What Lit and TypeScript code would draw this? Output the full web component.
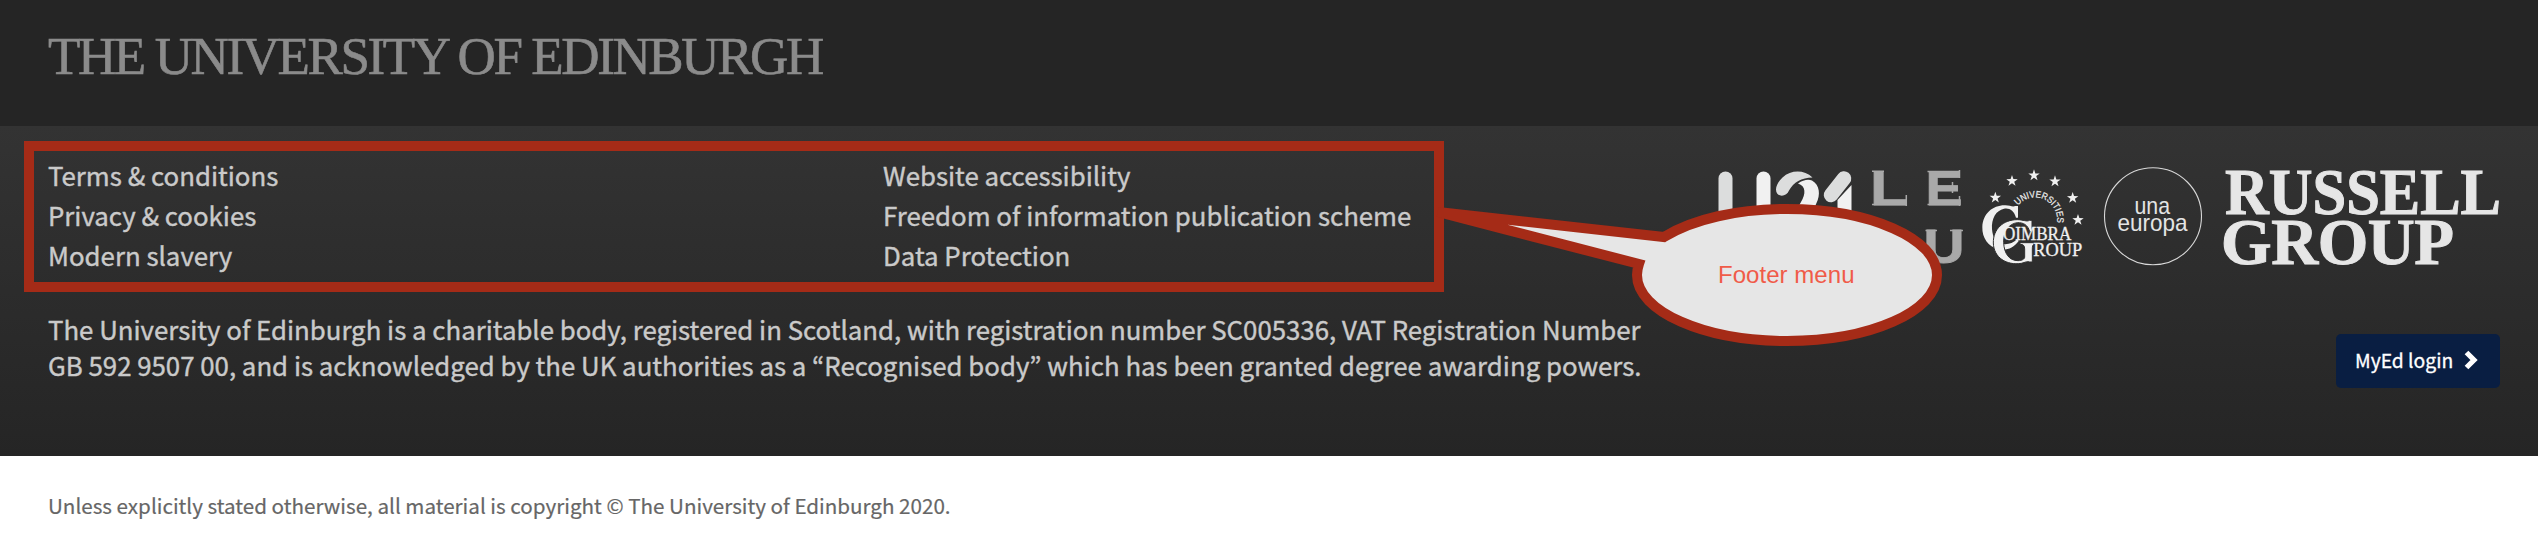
import { LitElement, html, css, svg } from "lit";

const MENU = [
  ["Terms & conditions", "Privacy & cookies", "Modern slavery"],
  ["Website accessibility", "Freedom of information publication scheme", "Data Protection"],
];

const STARS = [[106, 127], [156, 77], [222, 60], [285, 78], [338, 128], [354, 194]];

const star = ([x, y]: number[]) => {
  const pts = Array.from({ length: 10 }, (_, i) => {
    const r = i % 2 ? 7 : 18;
    const a = (Math.PI / 5) * i - Math.PI / 2;
    return `${(x + r * Math.cos(a)).toFixed(1)},${(y + 1 + r * Math.sin(a)).toFixed(1)}`;
  });
  return svg`<polygon points=${pts.join(" ")} />`;
};

class PartnerLogos extends LitElement {
  static styles = css`
    :host { display: flex; align-items: flex-start; }
    svg { display: block; flex: none; overflow: visible; }
    .u21 { width: 142px; height: 106px; }
    .leru { width: 104px; height: 106px; }
    .coimbra { width: 132px; height: 106px; }
    .una { width: 116px; height: 106px; }
    .russell { width: 286px; height: 106px; }
    .serif { font-family: "Liberation Serif", serif; }
    .sans { font-family: "Liberation Sans", sans-serif; }
    .bold { font-weight: 700; }
  `;

  render() {
    return html`
      <svg class="u21" viewBox="1718 165 142 106" role="img" aria-label="U21">
        <path d="M1725.5 178.5V240" stroke="#dcdddd" stroke-width="14" stroke-linecap="round" />
        <path d="M1763.5 178.5V240" stroke="#f1f1f1" stroke-width="14" stroke-linecap="round" />
        <path d="M1812.5 177.5C1804 169.5 1791 169.8 1782.5 177.5C1778.5 181.3 1776 185.5 1776 189.5C1776 197.5 1786.5 197.5 1789 190.5C1793.5 182.5 1801.5 177.5 1812.5 177.5Z" fill="#dcdddd" />
        <path d="M1798 183.5C1803 180 1808 179 1812 180.5C1820 185 1820.5 195 1816.5 203L1812 213H1795L1801 202C1806 194 1806 186 1798 183.5Z" fill="#f1f1f1" />
        <path d="M1831 195L1844 178.5" stroke="#dcdddd" stroke-width="14.5" stroke-linecap="round" />
        <path d="M1851.5 185V215H1837.5V200Z" fill="#f1f1f1" />
      </svg>
      <svg class="leru" viewBox="1860 165 104 106" role="img" aria-label="LERU">
        <g class="sans bold" fill="#a9a9a9" stroke="#a9a9a9" stroke-width="0.8" font-size="48">
          <text x="1870" y="204.5" textLength="38" lengthAdjust="spacingAndGlyphs">L</text>
          <text x="1925.5" y="204.5" textLength="37" lengthAdjust="spacingAndGlyphs">E</text>
          <text x="1923.5" y="262.5" textLength="41" lengthAdjust="spacingAndGlyphs">U</text>
        </g>
        <path d="M1872 171.3H1884M1872 204.5H1907M1906.3 195V206M1927.5 171.5H1960M1927.5 204.5H1960M1959.5 170V178M1959.5 196V206M1952.5 182V193M1925.5 230.5H1937M1950 230.5H1963" stroke="#a9a9a9" stroke-width="1.5" />
      </svg>
      <svg class="coimbra" viewBox="1964 165 132 106" role="img" aria-label="Coimbra Group Universities">
        <g transform="translate(1960 155) scale(0.333333)" fill="#f0f0f0">
          ${STARS.map(star)}
          <path id="arc" d="M174 152A66 66 0 0 1 288 214" fill="none" />
          <text class="sans" font-size="28" stroke="#f0f0f0" stroke-width="0.6">
            <textPath href="#arc" textLength="172" lengthAdjust="spacingAndGlyphs">UNIVERSITIES</textPath>
          </text>
          <path d="M174 153V188H168C162 166 148 158 132 161C108 166 94 190 96 222C98 248 108 264 124 266C140 270 158 266 172 252L176 258C160 280 138 288 116 282C84 276 66 248 67 216C69 176 98 150 136 151C150 151 158 157 166 153Z" />
          <path d="M216 196V230H209C204 210 190 202 172 203C146 206 130 230 131 262C132 296 148 317 174 317C186 317 194 312 194 306V282C194 272 190 268 180 268V263H222V268C218 270 217 274 217 282V321H209C202 318 196 322 184 325C140 332 101 308 100 264C99 222 130 194 172 194C190 194 200 201 208 196Z" stroke="#2f2f2f" stroke-width="3" />
          <g class="serif" stroke="#f0f0f0" stroke-width="1">
            <text x="129" y="256" font-size="58" textLength="205" lengthAdjust="spacingAndGlyphs">OIMBRA</text>
            <text x="220" y="302" font-size="58" textLength="147" lengthAdjust="spacingAndGlyphs">ROUP</text>
          </g>
        </g>
      </svg>
      <svg class="una" viewBox="2096 165 116 106" role="img" aria-label="una europa">
        <circle cx="2153" cy="216.3" r="48.5" fill="none" stroke="#d8d8d8" stroke-width="1.1" />
        <g class="sans" fill="#e4e4e4" font-size="24">
          <text x="2134.5" y="214" textLength="35.5" lengthAdjust="spacingAndGlyphs">una</text>
          <text x="2117.5" y="231" textLength="70" lengthAdjust="spacingAndGlyphs">europa</text>
        </g>
      </svg>
      <svg class="russell" viewBox="2212 165 286 106" role="img" aria-label="Russell Group">
        <g class="serif bold" fill="#e6e6e6" stroke="#e6e6e6" stroke-width="1" font-size="65">
          <text x="2225" y="214" textLength="276" lengthAdjust="spacingAndGlyphs">RUSSELL</text>
          <text x="2221" y="264" textLength="233">GROUP</text>
        </g>
      </svg>
    `;
  }
}
customElements.define("partner-logos", PartnerLogos);

class AppRoot extends LitElement {
  static styles = css`
    :host {
      display: block;
      position: relative;
      height: 550px;
      overflow: hidden;
      background: #fff;
      font-family: "Noto Sans CJK KR", "Noto Sans", sans-serif;
    }
    header { height: 126px; box-sizing: border-box; padding: 26px 48px 0; background: #252525; }
    h1 {
      margin: 0;
      font: 400 53px/60px "Liberation Serif", serif;
      letter-spacing: -2.4px;
      color: #8b8b8b;
      -webkit-text-stroke: 0.6px currentColor;
      white-space: nowrap;
    }
    footer {
      height: 330px;
      box-sizing: border-box;
      padding: 15px 40px 0 24px;
      display: flex;
      justify-content: space-between;
      background: linear-gradient(#333, #252525);
      color: #cacaca;
      -webkit-text-stroke: 0.4px currentColor;
    }
    nav {
      width: 1420px;
      height: 151px;
      box-sizing: border-box;
      border: 10px solid #a52b17;
      padding: 4px 14px;
      display: grid;
      grid-template-columns: 835px auto;
    }
    ul { margin: 0; padding: 0; list-style: none; font-size: 25.82px; line-height: 40px; white-space: nowrap; }
    .legal { margin: 19px 0 0 24px; font-size: 25.8px; line-height: 36px; white-space: nowrap; }
    .side { display: flex; flex-direction: column; align-items: flex-end; padding-top: 24px; -webkit-text-stroke: 0; }
    .login {
      margin: 63px -2px 0 0;
      width: 164px;
      height: 54px;
      box-sizing: border-box;
      padding: 0 22px 2px 19px;
      display: flex;
      align-items: center;
      justify-content: space-between;
      border-radius: 5px;
      background: #091e42;
      color: #fff;
      font-size: 19.3px;
      -webkit-text-stroke: 0.3px currentColor;
      white-space: nowrap;
    }
    .login svg { width: 14px; height: 20px; }
    .copy { margin: 34px 48px 0; font-size: 20.62px; line-height: 30px; color: #666; -webkit-text-stroke: 0.2px currentColor; }
    .callout { position: absolute; left: 1434px; top: 190px; width: 520px; height: 166px; }
    .label { font: 24px "Liberation Sans", sans-serif; fill: #f05b49; }
  `;

  render() {
    return html`
      <header><h1>THE UNIVERSITY OF EDINBURGH</h1></header>
      <footer>
        <div>
          <nav>${MENU.map((c) => html`<ul>${c.map((t) => html`<li>${t}</li>`)}</ul>`)}</nav>
          <div class="legal">
            The University of Edinburgh is a charitable body, registered in Scotland, with registration number SC005336, VAT Registration Number<br />
            GB 592 9507 00, and is acknowledged by the UK authorities as a “Recognised body” which has been granted degree awarding powers.
          </div>
        </div>
        <div class="side">
          <partner-logos></partner-logos>
          <div class="login">
            MyEd login
            <svg viewBox="0 0 14 20"><path d="M2.5 2.5L10 10L2.5 17.5" fill="none" stroke="#fff" stroke-width="5.2" /></svg>
          </div>
        </div>
      </footer>
      <div class="copy">Unless explicitly stated otherwise, all material is copyright © The University of Edinburgh 2020.</div>
      <svg class="callout" viewBox="1434 190 520 166">
        <path d="M1438 212L1664 237C1693 219 1738 209 1787 209C1870 209 1937 238.5 1937 275S1870 341 1787 341S1637 311.5 1637 275Q1637 270 1639 264Z" fill="#e6e6e6" stroke="#a52b17" stroke-width="10" />
        <text class="label" x="1718" y="282.5" textLength="136.5">Footer menu</text>
      </svg>
    `;
  }
}
customElements.define("app-root", AppRoot);
